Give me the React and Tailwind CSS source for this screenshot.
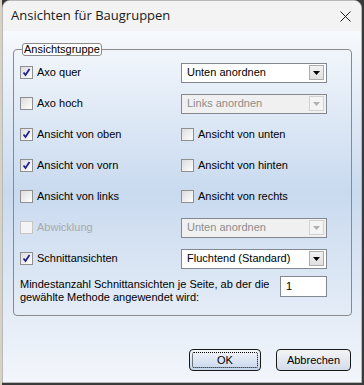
import React from "react";

const FONT = { fontFamily: '"Liberation Sans", Arial, sans-serif' };

const Check = ({ checked, disabled }) => (
  <span
    className={`w-[13px] h-[13px] shrink-0 flex items-center justify-center border ${
      disabled
        ? "border-[#c5c5c5] bg-[#f4f4f4]"
        : "border-[#8e8f8f] bg-gradient-to-br from-[#dcdcdc] to-[#ffffff]"
    }`}
  >
    {checked && (
      <svg width="9" height="9" viewBox="0 0 9 9">
        <path d="M1.5 4.5 L3.5 7 L7.5 1" fill="none" stroke="#21219b" strokeWidth="1.8" />
      </svg>
    )}
  </span>
);

const CheckRow = ({ label, checked, disabled }) => (
  <div className="flex items-center gap-[4px]">
    <Check checked={checked} disabled={disabled} />
    <span className={disabled ? "text-[#a9a9a9]" : "text-black"}>{label}</span>
  </div>
);

const Select = ({ value, disabled }) => (
  <div
    className={`w-[146px] h-[20px] border border-[#828790] flex items-center pl-[5px] pr-[2px] ${
      disabled ? "bg-[#f0f0f0] text-[#8d8d8d]" : "bg-white text-black"
    }`}
  >
    <span className="flex-1 leading-none">{value}</span>
    <span
      className={`w-[15px] h-[15px] border flex items-center justify-center ${
        disabled ? "border-[#d2d2d2] bg-[#f4f4f4]" : "border-[#acacac] bg-gradient-to-b from-[#f2f2f2] to-[#e0e0e0]"
      }`}
    >
      <svg width="7" height="4" viewBox="0 0 7 4">
        <path d="M0 0 H7 L3.5 4 Z" fill={disabled ? "#b0b0b0" : "#000"} />
      </svg>
    </span>
  </div>
);

const Button = ({ children, focused }) => (
  <button
    className={`h-[22px] rounded-[4px] border border-[#1a1a1a] p-[2px] bg-gradient-to-b ${
      focused ? "w-[72px] from-[#f4f6f9] to-[#c6d6ec]" : "w-[75px] from-[#f4f4f4] to-[#d4dceb]"
    }`}
  >
    <span
      className={`w-full h-full flex items-center justify-center leading-none ${
        focused ? "border border-dotted border-black rounded-[2px]" : ""
      }`}
    >
      {children}
    </span>
  </button>
);

export default function App() {
  const rows = [
    [{ label: "Axo quer", checked: true }, { select: "Unten anordnen" }],
    [{ label: "Axo hoch" }, { select: "Links anordnen", disabled: true }],
    [{ label: "Ansicht von oben", checked: true }, { label: "Ansicht von unten" }],
    [{ label: "Ansicht von vorn", checked: true }, { label: "Ansicht von hinten" }],
    [{ label: "Ansicht von links" }, { label: "Ansicht von rechts" }],
    [{ label: "Abwicklung", disabled: true }, { select: "Unten anordnen", disabled: true }],
    [{ label: "Schnittansichten", checked: true }, { select: "Fluchtend (Standard)" }],
  ];

  return (
    <div className="w-[364px] h-[385px] flex bg-[#3a3a3a] overflow-hidden text-[11px]" style={FONT}>
      <div className="w-[2px] h-full bg-[#d6d2c6]" />
      <div className="w-[360px] h-[383px] flex flex-col rounded-t-[8px] overflow-hidden border border-[#b9b9b9] bg-gradient-to-b from-[#ffffff] via-[#c9daef] to-[#f3f6fb]">
        {/* Title bar */}
        <div className="h-[30px] shrink-0 flex items-center justify-between bg-[#f3f3f3] pl-[8px] pr-[10px]">
          <span className="text-[13px] text-[#1a1a1a]" style={{ fontFamily: '"Open Sans", "Liberation Sans", sans-serif' }}>
            Ansichten für Baugruppen
          </span>
          <svg width="11" height="11" viewBox="0 0 11 11">
            <path d="M0.5 0.5 L10.5 10.5 M10.5 0.5 L0.5 10.5" stroke="#1a1a1a" strokeWidth="1" />
          </svg>
        </div>

        {/* Body */}
        <div className="flex-1 flex flex-col pt-[12px] px-[10px]">
          <fieldset className="h-[273px] border border-[#8a8a8a] rounded-[4px] pl-[6px] pr-[24px] m-0">
            <legend className="ml-[2px] px-[1px] h-[13px] leading-[11px] border border-[#8a8a8a] rounded-[3px] bg-white text-black">
              Ansichtsgruppe
            </legend>
            <div className="flex flex-col pt-[1px]">
              {rows.map((r, i) => (
                <div key={i} className="h-[31px] flex items-center">
                  <div className="w-[161px]">
                    <CheckRow {...r[0]} />
                  </div>
                  <div className="flex-1">
                    {r[1].select ? <Select value={r[1].select} disabled={r[1].disabled} /> : <CheckRow {...r[1]} />}
                  </div>
                </div>
              ))}
            </div>
            <div className="flex items-start mt-[3px]">
              <p className="w-[260px] leading-[13px] pt-[1px]">
                Mindestanzahl Schnittansichten je Seite, ab der die gewählte Methode angewendet wird:
              </p>
              <div className="w-[47px] h-[21px] border border-[#828790] bg-white flex items-center pl-[5px] mt-[-1px]">
                1
              </div>
            </div>
          </fieldset>

          <div className="flex justify-end gap-[15px] mt-[33px] pr-[-1px]">
            <Button focused>OK</Button>
            <Button>Abbrechen</Button>
          </div>
        </div>
      </div>
      <div className="w-[2px] h-full bg-[#3a3a3a]" />
    </div>
  );
}
